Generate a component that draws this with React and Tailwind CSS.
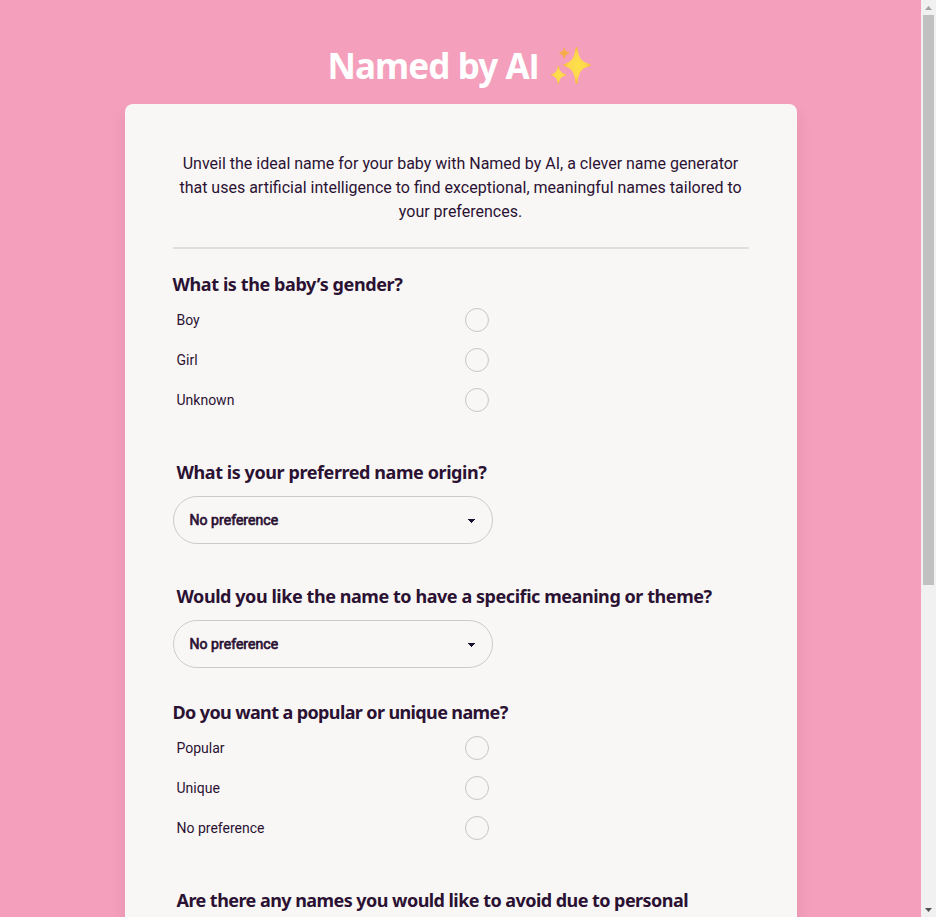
const HEADING_FONT = "font-['Noto_Sans',sans-serif] font-bold text-[18px] leading-6 whitespace-nowrap";

function Heading({ children, className }) {
  return <h2 className={`${HEADING_FONT} ${className}`}>{children}</h2>;
}

function RadioList({ name, options }) {
  return (
    <div className="w-[316px]">
      {options.map((option) => (
        <label key={option} className="flex h-10 items-center justify-between pl-1 text-sm">
          <span>{option}</span>
          <input
            type="radio"
            name={name}
            className="size-6 appearance-none rounded-full border border-[#c6c4c6]"
          />
        </label>
      ))}
    </div>
  );
}

function SelectBox({ value }) {
  return (
    <button
      type="button"
      className="flex h-12 w-80 items-center justify-between rounded-full border border-[#cccacb] pr-[17px] pl-4 text-sm"
    >
      <span className="tracking-[0.05px] [-webkit-text-stroke:0.7px_#2b1233]">{value}</span>
      <svg className="mt-0.5 h-1 w-[7px]" viewBox="0 0 7 4" shapeRendering="crispEdges" fill="#1b1230">
        <path d="M0 0h7v1H6v1H5v1H4v1H3V3H2V2H1V1H0z" />
      </svg>
    </button>
  );
}

function Sparkles() {
  return (
    <svg className="h-[42px] w-[42px]" viewBox="0 0 42 42">
      <defs>
        <radialGradient id="gold">
          <stop offset="0" stopColor="#fee04a" />
          <stop offset="0.6" stopColor="#fdd84d" />
          <stop offset="1" stopColor="#f4b83f" />
        </radialGradient>
      </defs>
      <path
        d="M26.5 2c.8 0 1 1 1.200 2 1 8 3 12.500 11 14.700 1.400.4 2.300.7 2.300 1.400s-.9 1-2.300 1.400c-8 2.200-10 6.500-11 15.500-.2 1.200-.4 2-1.200 2s-1-.8-1.200-2c-1-9-3-13.300-10-15.500-1.200-.4-2-.7-2-1.400s.8-1 2-1.400c7-2.200 9-6.700 10-14.700.2-1 .4-2 1.200-2z"
        fill="url(#gold)"
      />
      <path
        d="M8.300 21c.5 0 .7.500.8 1.100.6 4 1.600 5.700 6 6.900.8.200 1.200.5 1.200.9s-.4.700-1.200.9c-4.400 1.200-5.400 3.200-6 7-.1.700-.3 1.200-.8 1.200s-.7-.5-.8-1.200c-.6-3.800-1.600-5.800-5.500-7-.8-.2-1.200-.5-1.200-.9s.4-.7 1.200-.9c3.900-1.200 4.900-2.900 5.500-6.900.1-.6.300-1.100.8-1.100z"
        fill="url(#gold)"
      />
      <path
        d="M14.200 2.500c.4 0 .5.400.6.800.4 2.600 1.200 3.400 3.900 4.200.5.200.8.300.8.600s-.3.500-.8.700c-2.700.8-3.500 1.800-3.900 4.200-.1.400-.2.800-.6.800s-.5-.4-.6-.8c-.4-2.400-1.200-3.400-3.700-4.200-.5-.2-.8-.4-.8-.7s.3-.4.8-.6c2.500-.8 3.300-1.600 3.700-4.200.1-.4.200-.8.600-.8z"
        fill="#f6ad49"
      />
    </svg>
  );
}

function Scrollbar() {
  return (
    <div className="flex w-[15px] shrink-0 flex-col items-center bg-[#f1f1f1]">
      <div className="flex h-[15px] items-center">
        <svg className="h-1 w-[7px]" viewBox="0 0 7 4" fill="#a3a3a3">
          <path d="M3.500 0L7 4H0z" />
        </svg>
      </div>
      <div className="h-[570px] w-[11px] bg-[#c1c1c1]" />
      <div className="mt-auto flex h-[15px] items-center">
        <svg className="h-1 w-[7px]" viewBox="0 0 7 4" fill="#505050">
          <path d="M0 0h7L3.500 4z" />
        </svg>
      </div>
    </div>
  );
}

export default function App() {
  return (
    <div className="flex h-[917px] w-[936px] overflow-hidden bg-[#f49fbc] font-[Roboto,sans-serif] text-[#2b1233]">
      <main className="flex flex-1 flex-col items-center">
        <h1 className="flex h-[104px] w-[672px] shrink-0 items-start pt-[45px] pl-[203px] font-['Noto_Sans',sans-serif] text-[35px] leading-[42px] font-bold whitespace-nowrap text-white">
          <span className="w-[222px] tracking-[-0.9px]">
            Named by A<span className="font-[Roboto,sans-serif]">I</span>
          </span>
          <Sparkles />
        </h1>
        <section className="h-[1400px] w-[672px] shrink-0 rounded-t-lg bg-[#f9f7f6] px-12 pt-12 shadow-[0_8px_16px_rgba(43,18,51,0.08)]">
          <p className="border-b-2 border-[#e0dedd] pb-[23px] text-center text-base leading-6">
            Unveil the ideal name for your baby with Named by AI, a clever name generator that uses
            artificial intelligence to find exceptional, meaningful names tailored to your preferences.
          </p>
          <Heading className="mt-[23px] mb-1 tracking-[-0.4px]">What is the baby’s gender?</Heading>
          <RadioList name="gender" options={["Boy", "Girl", "Unknown"]} />
          <Heading className="mt-10 mb-3 pl-1 tracking-[-0.42px]">
            What is your preferred name origin?
          </Heading>
          <SelectBox value="No preference" />
          <Heading className="mt-10 mb-3 pl-1 tracking-[-0.44px]">
            Would you like the name to have a specific meaning or theme?
          </Heading>
          <SelectBox value="No preference" />
          <Heading className="mt-8 mb-1 tracking-[-0.62px]">
            Do you want a popular or unique name?
          </Heading>
          <RadioList name="popularity" options={["Popular", "Unique", "No preference"]} />
          <Heading className="mt-10 pl-1 tracking-[-0.55px]">
            Are there any names you would like to avoid due to personal
          </Heading>
        </section>
      </main>
      <Scrollbar />
    </div>
  );
}
